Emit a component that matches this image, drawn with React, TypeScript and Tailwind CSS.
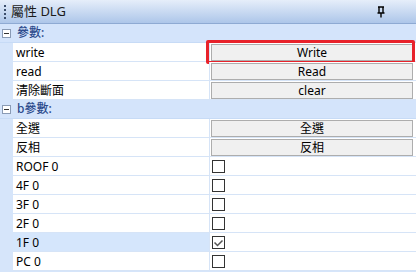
import React from 'react';

type Row =
  | { kind: 'button'; name: string; label: string; highlight?: boolean }
  | { kind: 'check'; name: string; checked: boolean; selected?: boolean };

const groups: { title: string; rows: Row[] }[] = [
  {
    title: '參數:',
    rows: [
      { kind: 'button', name: 'write', label: 'Write', highlight: true },
      { kind: 'button', name: 'read', label: 'Read' },
      { kind: 'button', name: '清除斷面', label: 'clear' },
    ],
  },
  {
    title: 'b參數:',
    rows: [
      { kind: 'button', name: '全選', label: '全選' },
      { kind: 'button', name: '反相', label: '反相' },
      { kind: 'check', name: 'ROOF 0', checked: false },
      { kind: 'check', name: '4F 0', checked: false },
      { kind: 'check', name: '3F 0', checked: false },
      { kind: 'check', name: '2F 0', checked: false },
      { kind: 'check', name: '1F 0', checked: true, selected: true },
      { kind: 'check', name: 'PC 0', checked: false },
    ],
  },
];

function Minus() {
  return (
    <div className="w-[9px] h-[9px] border border-[#8a9bb5] bg-white flex items-center justify-center">
      <div className="w-[5px] h-px bg-[#333]" />
    </div>
  );
}

function Pin() {
  return (
    <svg width="10" height="12" viewBox="0 0 10 12">
      <path d="M2 1h6M3 1v6M7 1v6M1.5 7h7M5 7v4.5" stroke="#000" strokeWidth="1.4" fill="none" />
    </svg>
  );
}

export default function App() {
  return (
    <div
      className="w-[416px] h-[272px] overflow-hidden bg-[#d6e5fa] text-[12px] text-black"
      style={{ fontFamily: '"Noto Sans", "Noto Sans CJK TC", sans-serif' }}
    >
      {/* title bar */}
      <div className="h-[24px] flex items-center border-b border-[#8eaad3] bg-gradient-to-b from-[#e6eefa] to-[#adc6e9] pl-[4px] pr-[30px]">
        <div className="flex flex-col gap-[2px] mr-[5px]">
          <div className="w-[2px] h-[2px] bg-[#3b4d6b]" />
          <div className="w-[2px] h-[2px] bg-[#3b4d6b]" />
          <div className="w-[2px] h-[2px] bg-[#3b4d6b]" />
          <div className="w-[2px] h-[2px] bg-[#3b4d6b]" />
        </div>
        <span className="text-[13px] text-[#1b1b1b] leading-none">屬性 DLG</span>
        <div className="ml-auto">
          <Pin />
        </div>
      </div>

      {groups.map((g) => (
        <div key={g.title}>
          <div className="h-[19px] flex items-center bg-[#d4e4fb] border-b border-[#c7dbf6]">
            <div className="w-[13px] flex justify-center">
              <Minus />
            </div>
            <span className="ml-[4px] text-[#2b4a8c] font-medium leading-none">{g.title}</span>
          </div>
          {g.rows.map((r) => (
            <div key={r.name} className="h-[19px] flex">
              <div className="w-[13px] shrink-0" />
              <div
                className={`w-[196px] shrink-0 flex items-center pl-[3px] pt-px border-b border-[#d6e4f7] leading-none ${
                  r.kind === 'check' && r.selected ? 'bg-[#d5e6fc]' : 'bg-white'
                }`}
              >
                {r.name}
              </div>
              <div className="flex-1 bg-white border-l border-[#d6e4f7] border-b border-b-[#d6e4f7] flex items-center relative">
                {r.kind === 'button' ? (
                  <div className="ml-[1px] mr-[3px] h-[17px] pt-px flex-1 bg-[#f0f0f0] border border-[#adadad] flex items-center justify-center leading-none">
                    {r.label}
                  </div>
                ) : (
                  <div className="ml-[2px] w-[13px] h-[13px] border border-[#333] bg-white flex items-center justify-center">
                    {r.checked && (
                      <svg width="11" height="11" viewBox="0 0 11 11">
                        <path d="M1.5 5.5l3 3 5-5" stroke="#555" strokeWidth="1.5" fill="none" />
                      </svg>
                    )}
                  </div>
                )}
                {r.kind === 'button' && r.highlight && (
                  <div className="absolute left-[-4px] right-[1px] top-[-3px] bottom-[-3px] border-[3px] border-[#e8222b] rounded-[2px]" />
                )}
              </div>
            </div>
          ))}
        </div>
      ))}
    </div>
  );
}
